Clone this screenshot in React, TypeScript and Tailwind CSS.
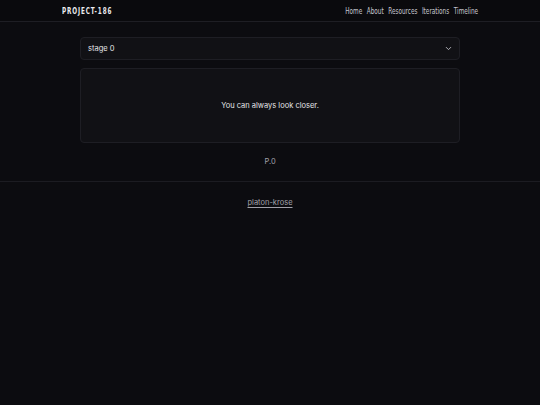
import { ChevronDown } from "lucide-react";

const navItems = ["Home", "About", "Resources", "Iterations", "Timeline"];

const condensed = { fontFamily: "'DejaVu Sans Condensed', 'Liberation Sans Narrow', sans-serif" };

const App = () => {
  return (
    <div
      className="min-h-[405px] bg-[#0c0c10] text-[#e4e4e7] antialiased"
      style={{ fontFamily: "Inter, 'Noto Sans', sans-serif" }}
    >
      {/* Header */}
      <header className="h-[22px] border-b border-[#1e1e24] bg-[#0a0a0d]">
        <div className="mx-[62px] flex h-full items-center justify-between pt-[2px]">
          <span
            className="inline-block origin-left scale-x-[0.7] text-[9px] font-bold tracking-[0.14em] text-[#ececf0]"
            style={condensed}
          >
            PROJECT-186
          </span>
          <nav
            className="flex origin-right scale-x-[0.75] items-center gap-[6px] text-[8.5px] text-[#c8c8d0]"
            style={condensed}
          >
            {navItems.map((item) => (
              <a key={item} className="cursor-pointer">
                {item}
              </a>
            ))}
          </nav>
        </div>
      </header>

      {/* Main */}
      <main className="mx-auto w-[380px] pt-[15px]">
        <button className="flex h-[23px] w-full items-center justify-between rounded-[4px] border border-[#1e1e24] bg-[#111115] pl-[7px] pr-[6px] text-[7.5px] text-[#e4e4e7]">
          <span>stage 0</span>
          <ChevronDown className="h-[9px] w-[9px] text-[#b4b4bc]" strokeWidth={2.5} />
        </button>

        <div className="mt-[8px] flex h-[75px] items-center justify-center rounded-[4px] border border-[#1e1e24] bg-[#111115] text-[7.5px] text-[#e4e4e7]">
          You can always look closer.
        </div>

        <div className="flex h-[38px] items-center justify-center text-[7.5px] text-[#a1a1aa]">P.0</div>
      </main>

      {/* Footer */}
      <footer className="border-t border-[#1c1c22] pt-[9px] text-center leading-none">
        <a className="text-[7.5px] text-[#a1a1aa] underline underline-offset-2">platon-krose</a>
      </footer>
    </div>
  );
};

export default App;
